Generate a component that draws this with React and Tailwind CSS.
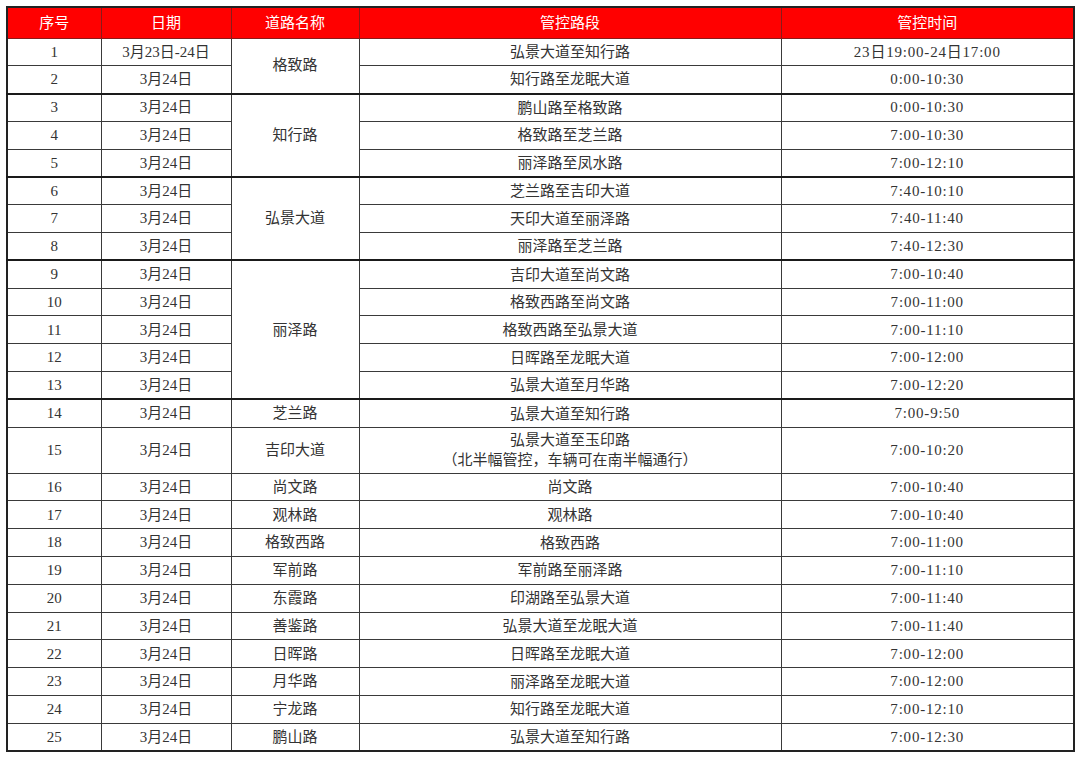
import React from 'react'

const rows = [
  { no: 1, date: '3月23日-24日', road: '格致路', span: 2, section: '弘景大道至知行路', time: '23日19:00-24日17:00' },
  { no: 2, date: '3月24日', section: '知行路至龙眠大道', time: '0:00-10:30' },
  { no: 3, date: '3月24日', road: '知行路', span: 3, section: '鹏山路至格致路', time: '0:00-10:30', group: true },
  { no: 4, date: '3月24日', section: '格致路至芝兰路', time: '7:00-10:30' },
  { no: 5, date: '3月24日', section: '丽泽路至凤水路', time: '7:00-12:10' },
  { no: 6, date: '3月24日', road: '弘景大道', span: 3, section: '芝兰路至吉印大道', time: '7:40-10:10', group: true },
  { no: 7, date: '3月24日', section: '天印大道至丽泽路', time: '7:40-11:40' },
  { no: 8, date: '3月24日', section: '丽泽路至芝兰路', time: '7:40-12:30' },
  { no: 9, date: '3月24日', road: '丽泽路', span: 5, section: '吉印大道至尚文路', time: '7:00-10:40', group: true },
  { no: 10, date: '3月24日', section: '格致西路至尚文路', time: '7:00-11:00' },
  { no: 11, date: '3月24日', section: '格致西路至弘景大道', time: '7:00-11:10' },
  { no: 12, date: '3月24日', section: '日晖路至龙眠大道', time: '7:00-12:00' },
  { no: 13, date: '3月24日', section: '弘景大道至月华路', time: '7:00-12:20' },
  { no: 14, date: '3月24日', road: '芝兰路', span: 1, section: '弘景大道至知行路', time: '7:00-9:50', group: true },
  { no: 15, date: '3月24日', road: '吉印大道', span: 1, section: '弘景大道至玉印路', note: '（北半幅管控，车辆可在南半幅通行）', time: '7:00-10:20', tall: true },
  { no: 16, date: '3月24日', road: '尚文路', span: 1, section: '尚文路', time: '7:00-10:40' },
  { no: 17, date: '3月24日', road: '观林路', span: 1, section: '观林路', time: '7:00-10:40' },
  { no: 18, date: '3月24日', road: '格致西路', span: 1, section: '格致西路', time: '7:00-11:00' },
  { no: 19, date: '3月24日', road: '军前路', span: 1, section: '军前路至丽泽路', time: '7:00-11:10' },
  { no: 20, date: '3月24日', road: '东霞路', span: 1, section: '印湖路至弘景大道', time: '7:00-11:40' },
  { no: 21, date: '3月24日', road: '善鉴路', span: 1, section: '弘景大道至龙眠大道', time: '7:00-11:40' },
  { no: 22, date: '3月24日', road: '日晖路', span: 1, section: '日晖路至龙眠大道', time: '7:00-12:00' },
  { no: 23, date: '3月24日', road: '月华路', span: 1, section: '丽泽路至龙眠大道', time: '7:00-12:00' },
  { no: 24, date: '3月24日', road: '宁龙路', span: 1, section: '知行路至龙眠大道', time: '7:00-12:10' },
  { no: 25, date: '3月24日', road: '鹏山路', span: 1, section: '弘景大道至知行路', time: '7:00-12:30' },
]

const App = () => {
  const cell = 'border border-[#3a3a3a] text-center align-middle p-0'

  return (
    <div className="w-[1080px] h-[758px] bg-white pt-[6px] pl-[6px]" style={{ fontFamily: '"Liberation Serif", "Noto Sans CJK SC", serif' }}>
      <table className="table-fixed border-collapse w-[1067px] border-2 border-[#222] text-[15px] text-[#333]">
        <colgroup>
          <col className="w-[94px]" />
          <col className="w-[130px]" />
          <col className="w-[128px]" />
          <col className="w-[422px]" />
          <col className="w-[293px]" />
        </colgroup>
        <thead>
          <tr className="h-[31px] bg-[#ff0000] text-white text-[15px]">
            <th className="border border-[#8a1a1a] font-normal">序号</th>
            <th className="border border-[#8a1a1a] font-normal">日期</th>
            <th className="border border-[#8a1a1a] font-normal">道路名称</th>
            <th className="border border-[#8a1a1a] font-normal">管控路段</th>
            <th className="border border-[#8a1a1a] font-normal">管控时间</th>
          </tr>
        </thead>
        <tbody>
          {rows.map((row) => {
            const top = row.group ? ' border-t-2 border-t-[#1a1a1a]' : ''
            return (
              <tr key={row.no} className={row.tall ? 'h-[46px]' : 'h-[27.8px]'}>
                <td className={cell + top}>{row.no}</td>
                <td className={cell + top}>{row.date}</td>
                {row.road && (
                  <td rowSpan={row.span} className={cell + top}>{row.road}</td>
                )}
                <td className={cell + top + ' leading-[20px]'}>
                  <div>{row.section}</div>
                  {row.note && <div>{row.note}</div>}
                </td>
                <td className={cell + top + ' tracking-[0.8px]'}>{row.time}</td>
              </tr>
            )
          })}
        </tbody>
      </table>
    </div>
  )
}

export default App
